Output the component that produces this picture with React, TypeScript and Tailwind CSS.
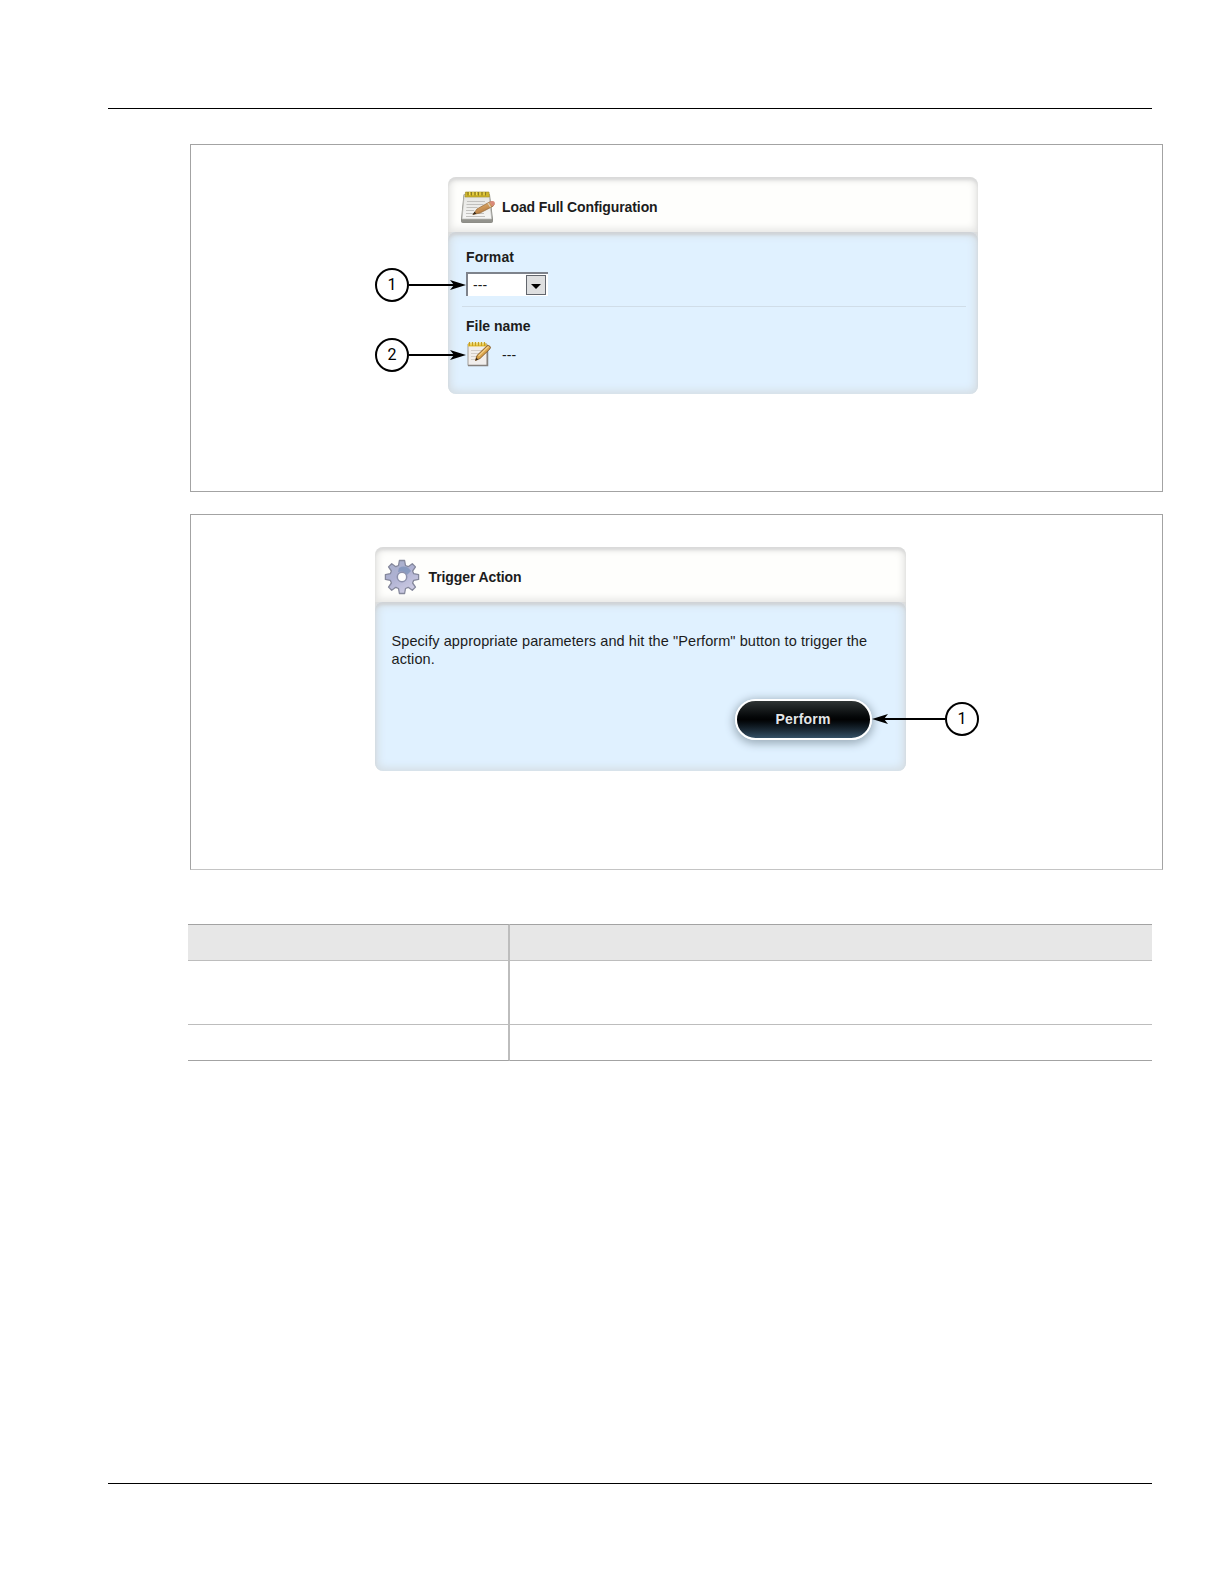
import type { ReactNode } from 'react';

interface PanelProps {
  title: string;
  icon: ReactNode;
  className?: string;
  children: ReactNode;
}

function NotepadIcon() {
  return (
    <svg width="36" height="34" viewBox="0 0 36 34" className="shrink-0">
      <defs>
        <linearGradient id="page" x1="0" y1="0" x2="0" y2="1">
          <stop offset="0" stopColor="#e4e4e0" />
          <stop offset="1" stopColor="#f6f6f5" />
        </linearGradient>
        <linearGradient id="pencil" x1="0" y1="0" x2="0.5" y2="1">
          <stop offset="0" stopColor="#eec07a" />
          <stop offset="1" stopColor="#b0733a" />
        </linearGradient>
      </defs>
      <path d="M4 4.5h25.5l3 24.5v2.5q0 1-1 1H2.500q-1 0-1-1V29z" fill="#92928c" stroke="#7d7d77" strokeWidth="0.8" />
      <path d="M4.200 4.500h25l2.500 24.500H2z" fill="url(#page)" stroke="#b9b9b4" strokeWidth="0.7" />
      <path d="M7 11.500h18M6.500 14.500h17M6.500 17.500h11M6 20.500h8M6 23.500h18M6 26.500h19" stroke="#bcbbb8" strokeWidth="0.9" />
      <path d="M5.500 2h23.500l.4 5H5z" fill="#cfb529" stroke="#9d8a24" strokeWidth="0.6" />
      <path d="M8 2v3.500M11.500 2v3.500M15 2v3.500M18.500 2v3.500M22 2v3.500M25.500 2v3.500" stroke="#8a7a24" strokeWidth="1.100" />
      <path d="M9.500 2v3M13 2v3M16.500 2v3M20 2v3M24 2v3" stroke="#f0de58" strokeWidth="1" />
      <path d="M13 24.500l4-5.500L29.500 12q3-.8 4.200.8t-.6 3.400L20 23z" fill="url(#pencil)" stroke="#9a7040" strokeWidth="0.8" />
      <path d="M29.500 12l1.500-.8q2.700-.6 3.600.9t-.8 3.300l-1.600.9z" fill="#d98a7a" />
      <path d="M28 13l2.600 4.300" stroke="#ddd0b8" strokeWidth="1.200" />
      <path d="M12.500 24.800l2-3 2 2z" fill="#33291f" />
    </svg>
  );
}

function EditIcon() {
  return (
    <svg width="26" height="27" viewBox="0 0 26 27" className="shrink-0">
      <path d="M2 3h19v21.500H2z" fill="#f1eeec" stroke="#a29d98" strokeWidth="1" />
      <path d="M2 24.500h19.500V9" fill="none" stroke="#85817d" strokeWidth="1.500" />
      <path d="M5 9.500h13M5 12.500h11M5 15.500h8M5 18.500h5" stroke="#cbc5c2" strokeWidth="0.8" />
      <path d="M2 2.500h18.500v3H2z" fill="#e5c13a" />
      <path d="M3.500 1v4M6.500 1v4M9.500 1v4M12.500 1v4M15.500 1v4M18.500 1v4" stroke="#c59e22" strokeWidth="1.200" />
      <path d="M5 1v3M8 1v3M11 1v3M14 1v3M17 1v3" stroke="#f8e884" strokeWidth="1" />
      <path d="M9.500 19.500l1.500-5L21 4.800q1.500-.8 2.800.4t.2 2.600L14 17.500z" fill="#d9a34b" stroke="#80551f" strokeWidth="0.9" />
      <path d="M12.500 15L22.500 5.500" stroke="#f3cf87" strokeWidth="1.100" />
      <path d="M9.500 19.500l.8-2.800 2 1.700z" fill="#2f2518" />
    </svg>
  );
}

function GearIcon() {
  return (
    <svg width="36" height="36" viewBox="-18 -18 36 36" className="-ml-[3px] shrink-0">
      <defs>
        <linearGradient id="gear" x1="0" y1="0" x2="0.6" y2="1">
          <stop offset="0" stopColor="#a7b0ca" />
          <stop offset="0.5" stopColor="#aeb1d2" />
          <stop offset="1" stopColor="#cdcbe3" />
        </linearGradient>
      </defs>
      <path
        d="M-2.600 -16.500H2.600L3.500 -11.500L6.200 -10.300L10.300 -13.300L13.500 -10.100L10.600 -6L11.700 -3.300L16.600 -2.400V2.400L11.700 3.300L10.600 6L13.500 10.100L10.300 13.300L6.200 10.300L3.500 11.500L2.600 16.500H-2.600L-3.500 11.500L-6.200 10.300L-10.300 13.300L-13.500 10.100L-10.600 6L-11.700 3.300L-16.600 2.400V-2.400L-11.700 -3.300L-10.600 -6L-13.500 -10.100L-10.300 -13.300L-6.200 -10.300L-3.500 -11.500Z"
        fill="url(#gear)"
        stroke="#85889c"
        strokeWidth="1.300"
        strokeLinejoin="round"
      />
      <path d="M-3 -9Q4 -13 9 -6L5 -2Q2 -7 -4 -5Z" fill="#7890b8" opacity="0.7" />
      <circle r="4.700" fill="#fdfdfd" stroke="#8c90ab" strokeWidth="1.500" />
    </svg>
  );
}

function Panel({ title, icon, className, children }: PanelProps) {
  return (
    <section className={`flex flex-col overflow-hidden rounded-lg bg-[#dcdddd] ${className}`}>
      <header className="flex h-[55px] items-center rounded-t-lg bg-[#fefefc] pl-2 pt-[5px] shadow-[inset_0_3px_3px_#d9d9d9,inset_0_0_7px_3px_#e6e6e4]">
        <div className="flex w-[46px] items-center pl-1">{icon}</div>
        <h2 className="text-[14px] font-bold tracking-[-0.1px]">{title}</h2>
      </header>
      <div className="flex-1 rounded-lg bg-[#e0f1ff] shadow-[inset_0_3px_3px_#d0d3d6,inset_0_0_8px_3px_#d5dde3]">{children}</div>
    </section>
  );
}

interface CalloutProps {
  label: string;
  flip?: boolean;
  className: string;
}

// numbered circle with an arrow pointing at a control
function Callout({ label, flip, className }: CalloutProps) {
  return (
    <div className={`absolute flex items-center ${flip ? 'flex-row-reverse' : ''} ${className}`}>
      <div className="flex size-[34px] items-center justify-center rounded-full border-2 border-black bg-white font-['Roboto',sans-serif] text-[16px] leading-none text-black">
        {label}
      </div>
      {flip ? (
        <svg width="73" height="12" viewBox="0 0 73 12">
          <path d="M12 6h61" stroke="#000" strokeWidth="2" />
          <path d="M0 6l16-5-4 5 4 5z" />
        </svg>
      ) : (
        <svg width="57" height="12" viewBox="0 0 57 12">
          <path d="M0 6h46" stroke="#000" strokeWidth="2" />
          <path d="M57 6L41 1l4 5-4 5z" />
        </svg>
      )}
    </div>
  );
}

export default function App() {
  return (
    <main className="flex h-[1584px] w-[1224px] flex-col bg-white font-['Liberation_Sans',Arial,sans-serif] text-[#1c1c1c]">
      <div className="ml-[108px] mt-[108px] h-px w-[1044px] bg-black" />

      {/* Load configuration */}
      <div className="relative ml-[190px] mt-[35px] h-[348px] w-[973px] border border-[#a3a3a3]">
        <Panel title="Load Full Configuration" icon={<NotepadIcon />} className="ml-[257px] mt-8 h-[217px] w-[530px]">
          <div className="ml-3.5 mr-3 h-[75px] border-b border-[#d0dde8] pl-1 pt-[17px]">
            <label className="block text-[14px] font-bold leading-4 tracking-[0.1px]">Format</label>
            <div className="mt-[7px] flex h-6 w-[82px] items-center justify-between border-l-2 border-t-2 border-[#7e838c] bg-white pl-[5px] pr-0.5">
              <span className="text-[14px] leading-none tracking-[0.1px]">---</span>
              <span className="flex size-5 items-center justify-center border border-[#62666d] bg-[#dedfe0]">
                <svg width="10" height="5" viewBox="0 0 10 5" className="mt-0.5">
                  <path d="M0 0h10L5 5z" />
                </svg>
              </span>
            </div>
          </div>
          <div className="mx-3.5 pl-1 pt-[11px]">
            <label className="block text-[14px] font-bold leading-4">File name</label>
            <div className="mt-[7px] flex items-center">
              <EditIcon />
              <span className="ml-2.5 text-[14px] leading-none tracking-[0.1px]">---</span>
            </div>
          </div>
        </Panel>
        <Callout label="1" className="left-[184px] top-[123px]" />
        <Callout label="2" className="left-[184px] top-[193px]" />
      </div>

      {/* Trigger action */}
      <div className="relative ml-[190px] mt-[22px] h-[356px] w-[973px] border border-[#a3a3a3] border-b-[#c4c4c4]">
        <Panel title="Trigger Action" icon={<GearIcon />} className="ml-[183.5px] mt-8 h-[224px] w-[531px]">
          <p className="whitespace-nowrap pl-[17px] pt-[30px] text-[14.5px] leading-[18px] tracking-[0.08px]">
            Specify appropriate parameters and hit the "Perform" button to trigger the
            <br />
            action.
          </p>
          <div className="mr-[34px] mt-[31px] flex justify-end">
            <button className="h-[41px] w-[137px] rounded-full border-[2.5px] border-white bg-linear-to-b from-[#303535] via-[#020304] via-50% to-[#345066] text-[14px] font-bold tracking-[0.2px] text-[#e4e6e8] shadow-[0_2px_8px_2px_#9fb0bd]">
              Perform
            </button>
          </div>
        </Panel>
        <Callout label="1" flip className="left-[681px] top-[187px]" />
      </div>

      {/* Parameter table */}
      <table className="ml-[188px] mt-[54px] w-[964px] table-fixed border-separate border-spacing-0">
        <tbody>
          <tr className="h-9 bg-[#e7e7e7]">
            <td className="w-[322px] border-r-2 border-t border-r-[#bdbdbd] border-t-[#a3a3a3]" />
            <td className="border-t border-[#a3a3a3]" />
          </tr>
          <tr className="h-16">
            <td className="border-r-2 border-t border-[#bdbdbd]" />
            <td className="border-t border-[#bdbdbd]" />
          </tr>
          <tr className="h-[37px]">
            <td className="border-b border-r-2 border-t border-[#bdbdbd] border-b-[#a3a3a3]" />
            <td className="border-b border-t border-[#bdbdbd] border-b-[#a3a3a3]" />
          </tr>
        </tbody>
      </table>

      <div className="mb-[100px] ml-[108px] mt-auto h-px w-[1044px] bg-black" />
    </main>
  );
}
